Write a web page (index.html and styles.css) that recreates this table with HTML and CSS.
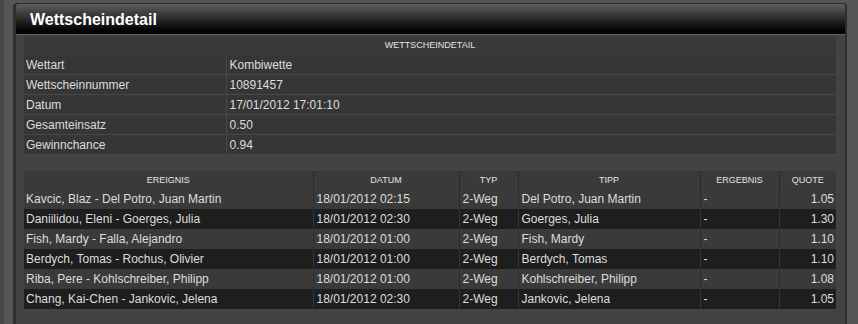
FILE: index.html
```html
<!DOCTYPE html>
<html lang="de">
<head>
<meta charset="utf-8">
<title>Wettscheindetail</title>
<link rel="stylesheet" href="styles.css">
</head>
<body>
<div class="frame">
  <div class="panel">
    <div class="header">Wettscheindetail</div>
    <div class="content">
      <table class="info">
        <colgroup><col class="c-label"><col></colgroup>
        <thead><tr><th colspan="2">WETTSCHEINDETAIL</th></tr></thead>
        <tbody>
          <tr><td>Wettart</td><td>Kombiwette</td></tr>
          <tr><td>Wettscheinnummer</td><td>10891457</td></tr>
          <tr><td>Datum</td><td>17/01/2012 17:01:10</td></tr>
          <tr><td>Gesamteinsatz</td><td>0.50</td></tr>
          <tr><td>Gewinnchance</td><td>0.94</td></tr>
        </tbody>
      </table>
      <table class="events">
        <colgroup>
          <col class="c1"><col class="c2"><col class="c3"><col class="c4"><col class="c5"><col class="c6">
        </colgroup>
        <thead>
          <tr><th>EREIGNIS</th><th>DATUM</th><th>TYP</th><th>TIPP</th><th>ERGEBNIS</th><th>QUOTE</th></tr>
        </thead>
        <tbody>
          <tr class="odd"><td>Kavcic, Blaz - Del Potro, Juan Martin</td><td>18/01/2012 02:15</td><td>2-Weg</td><td>Del Potro, Juan Martin</td><td>-</td><td class="num">1.05</td></tr>
          <tr class="even"><td>Daniilidou, Eleni - Goerges, Julia</td><td>18/01/2012 02:30</td><td>2-Weg</td><td>Goerges, Julia</td><td>-</td><td class="num">1.30</td></tr>
          <tr class="odd"><td>Fish, Mardy - Falla, Alejandro</td><td>18/01/2012 01:00</td><td>2-Weg</td><td>Fish, Mardy</td><td>-</td><td class="num">1.10</td></tr>
          <tr class="even"><td>Berdych, Tomas - Rochus, Olivier</td><td>18/01/2012 01:00</td><td>2-Weg</td><td>Berdych, Tomas</td><td>-</td><td class="num">1.10</td></tr>
          <tr class="odd"><td>Riba, Pere - Kohlschreiber, Philipp</td><td>18/01/2012 01:00</td><td>2-Weg</td><td>Kohlschreiber, Philipp</td><td>-</td><td class="num">1.08</td></tr>
          <tr class="even"><td>Chang, Kai-Chen - Jankovic, Jelena</td><td>18/01/2012 02:30</td><td>2-Weg</td><td>Jankovic, Jelena</td><td>-</td><td class="num">1.05</td></tr>
        </tbody>
      </table>
    </div>
  </div>
</div>
</body>
</html>
```
FILE: styles.css
```css
html, body {
  margin: 0;
  padding: 0;
}
body {
  background: #555555;
  font-family: "Liberation Sans", Arial, sans-serif;
  color: #dddddd;
  overflow: hidden;
}
.frame {
  height: 324px;
  box-sizing: border-box;
  border-left: 4px solid #474747;
  padding: 3px 11px 0 9px;
}
.panel {
  height: 100%;
  box-sizing: border-box;
  border: 1px solid #2e2e2e;
  border-left-width: 3px;
  border-right-width: 2px;
  border-bottom: 0;
  border-radius: 4px 4px 0 0;
  background: #434343;
}
.header {
  height: 30px;
  border-bottom: 1px solid #5f5f5f;
  border-radius: 3px 3px 0 0;
  background: linear-gradient(#5e5e5e 0%, #2a2a2a 50%, #050505 85%, #000 100%);
  display: flex;
  align-items: center;
  padding-left: 14px;
  padding-top: 1px;
  box-sizing: border-box;
  height: 31px;
  color: #ffffff;
  font-weight: bold;
  font-size: 16px;
}
.content {
  padding: 1px 9px 0 8px;
}
table {
  width: 100%;
  border-collapse: collapse;
  table-layout: fixed;
  font-size: 12px;
}
th {
  font-weight: normal;
  font-size: 9px;
  height: 18px;
  padding: 0;
  color: #e4e4e4;
  text-align: center;
  vertical-align: middle;
}
td {
  padding: 0 0 0 2px;
  height: 20px;
  white-space: nowrap;
  overflow: hidden;
  vertical-align: middle;
}
.info {
  background: #363636;
}
.info .c-label {
  width: 202px;
}
.info th {
  background: #393939;
  border-bottom: 1px solid #3e3e3e;
}
.info td {
  height: 19px;
  border-bottom: 1px solid #484848;
}
.info td + td {
  border-left: 1px solid #484848;
  padding-left: 3px;
}
.events {
  margin-top: 16px;
}
.events .c1 { width: 289px; }
.events .c2 { width: 146px; }
.events .c3 { width: 59px; }
.events .c4 { width: 182px; }
.events .c5 { width: 79px; }
.events .c6 { width: 57px; }
.events th {
  background: #3a3a3a;
  border-left: 1px solid #2b2b2b;
}
.events th:first-child {
  border-left: 0;
}
.events td + td {
  border-left: 1px solid #2c2c2c;
  padding-left: 3px;
}
.events tr.odd td {
  background: #3a3a3a;
}
.events tr.even td {
  background: #1e1e1e;
}
.events tr.even td + td {
  border-left-color: #353535;
}
.events td.num {
  text-align: right;
  padding-right: 2px;
}
```
